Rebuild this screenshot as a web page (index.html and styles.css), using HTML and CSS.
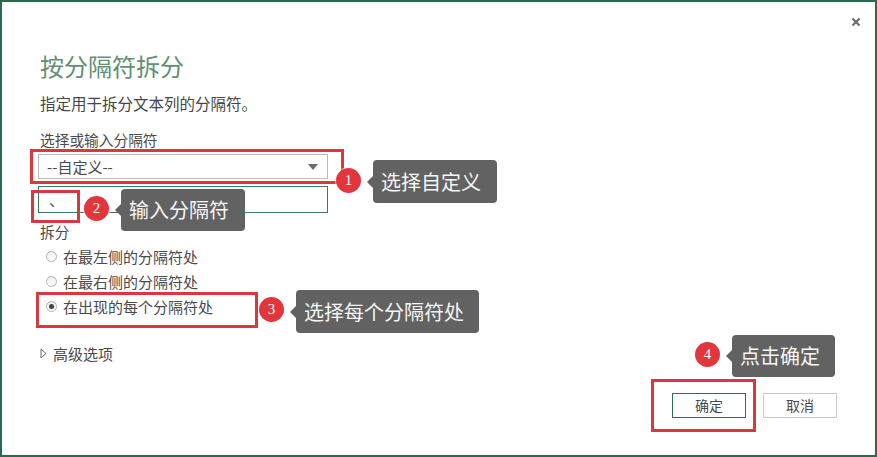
FILE: index.html
```html
<!DOCTYPE html>
<html lang="zh-CN">
<head>
<meta charset="utf-8">
<title>按分隔符拆分</title>
<link rel="stylesheet" href="styles.css">
</head>
<body>
<div class="dialog">
  <button class="close" aria-label="关闭">
    <svg width="10" height="10" viewBox="0 0 10 10"><path d="M1.5 1.5 L8.5 8.5 M8.5 1.5 L1.5 8.5" stroke="#6e6e6e" stroke-width="2.2"/></svg>
  </button>

  <h1 class="title">按分隔符拆分</h1>
  <p class="subtitle">指定用于拆分文本列的分隔符。</p>

  <div class="label">选择或输入分隔符</div>
  <div class="select">
    <span class="select-text">--自定义--</span>
    <svg class="select-arrow" width="10" height="6" viewBox="0 0 10 6"><polygon points="0,0 10,0 5,6" fill="#6b6b6b"/></svg>
  </div>
  <div class="textbox">、</div>

  <div class="label split-label">拆分</div>
  <div class="radios">
    <div class="radio-row"><span class="radio"></span><span>在最左侧的分隔符处</span></div>
    <div class="radio-row"><span class="radio"></span><span>在最右侧的分隔符处</span></div>
    <div class="radio-row"><span class="radio checked"></span><span>在出现的每个分隔符处</span></div>
  </div>

  <div class="advanced">
    <svg class="adv-arrow" width="7" height="11" viewBox="0 0 7 11"><polygon points="1,1 6,5.5 1,10" fill="none" stroke="#6b6b6b" stroke-width="1"/></svg>
    <span>高级选项</span>
  </div>

  <div class="footer">
    <button class="btn btn-primary">确定</button>
    <button class="btn">取消</button>
  </div>

  <!-- annotations -->
  <div class="mark mark-1"></div>
  <div class="mark mark-2"></div>
  <div class="mark mark-3"></div>
  <div class="mark mark-4"></div>

  <div class="badge badge-1">1</div>
  <div class="badge badge-2">2</div>
  <div class="badge badge-3">3</div>
  <div class="badge badge-4">4</div>

  <div class="tip tip-1">选择自定义</div>
  <div class="tip tip-2">输入分隔符</div>
  <div class="tip tip-3">选择每个分隔符处</div>
  <div class="tip tip-4">点击确定</div>
</div>
</body>
</html>
```

FILE: styles.css
```css
* { box-sizing: border-box; }

html, body {
  margin: 0;
  padding: 0;
  background: #ffffff;
}

.dialog {
  position: relative;
  width: 877px;
  height: 457px;
  border: 2px solid #2a6a4e;
  padding: 48px 38px 0 36px;
  font-family: "Noto Sans CJK SC", "Noto Sans", sans-serif;
  font-weight: 400;
  color: #4a4a4a;
  font-size: 15px;
  background: #ffffff;
  display: flex;
  flex-direction: column;
}

.close {
  position: absolute;
  top: 13px;
  right: 12px;
  width: 14px;
  height: 14px;
  padding: 2px;
  border: 0;
  background: transparent;
  display: flex;
}

.title {
  margin: 0;
  font-size: 24px;
  line-height: 32px;
  font-weight: 400;
  color: #628f75;
  padding-left: 2px;
}

.subtitle {
  margin: 11px 0 0;
  font-size: 15.5px;
  line-height: 20px;
  color: #474747;
  padding-left: 2px;
}

.label {
  margin-top: 17px;
  font-size: 14.7px;
  line-height: 20px;
  color: #4a4a4a;
  padding-left: 2px;
}

.select {
  margin-top: 4px;
  width: 290px;
  height: 25px;
  border: 1px solid #b9b9b9;
  display: flex;
  align-items: center;
  justify-content: space-between;
  padding: 0 9px 0 8px;
  font-size: 15px;
  color: #4a4a4a;
}

.select-text { line-height: 20px; }

.textbox {
  margin-top: 7px;
  width: 290px;
  height: 27px;
  border: 1px solid #3d7a5c;
  padding: 0 10px;
  font-size: 15px;
  line-height: 25px;
  color: #4a4a4a;
}

.split-label { margin-top: 9px; }

.radios {
  margin-top: 2px;
  display: flex;
  flex-direction: column;
}

.radio-row {
  height: 25px;
  display: flex;
  align-items: center;
  gap: 6px;
  padding-left: 8px;
  font-size: 15px;
  color: #4a4a4a;
}

.radio {
  width: 11px;
  height: 11px;
  border-radius: 50%;
  border: 1px solid #b3b3b3;
  background: linear-gradient(#eeeeee, #ffffff);
  display: flex;
  align-items: center;
  justify-content: center;
  flex: none;
}

.radio.checked::after {
  content: "";
  width: 5px;
  height: 5px;
  border-radius: 50%;
  background: #444444;
}

.advanced {
  margin-top: 24px;
  display: flex;
  align-items: center;
  gap: 6px;
  height: 20px;
  font-size: 15px;
  color: #4a4a4a;
  padding-left: 2px;
}

.adv-arrow { flex: none; }

.footer {
  margin-top: 30px;
  display: flex;
  justify-content: flex-end;
  gap: 17px;
}

.btn {
  width: 74px;
  height: 25px;
  border: 1px solid #cacaca;
  background: #ffffff;
  font-family: "Noto Sans CJK SC", "Noto Sans", sans-serif;
  font-weight: 400;
  font-size: 14px;
  color: #4a4a4a;
  padding: 0;
  line-height: 23px;
}

.btn-primary { border-color: #2f6d52; }

/* annotation overlays */
.mark {
  position: absolute;
  border: 3px solid #d8393f;
}
.mark-1 { left: 28px; top: 147px; width: 314px; height: 35px; }
.mark-2 { left: 29px; top: 188px; width: 49px; height: 33px; }
.mark-3 { left: 34px; top: 290px; width: 222px; height: 36px; }
.mark-4 { left: 649px; top: 377px; width: 105px; height: 53px; }

.badge {
  position: absolute;
  width: 25px;
  height: 25px;
  border-radius: 50%;
  background: #e2363c;
  color: #ffffff;
  font-family: "Liberation Serif", "DejaVu Serif", serif;
  font-size: 15px;
  line-height: 25px;
  text-align: center;
  box-shadow: 0 0 0 1px rgba(255,255,255,0.6);
}
.badge-1 { left: 334px; top: 166px; }
.badge-2 { left: 82px; top: 194px; }
.badge-3 { left: 257px; top: 295px; }
.badge-4 { left: 693px; top: 340px; }

.tip {
  position: absolute;
  background: #626262;
  color: #f6f6f6;
  border-radius: 4px;
  font-size: 20px;
  font-weight: 400;
  line-height: 24px;
  display: flex;
  align-items: center;
  justify-content: flex-start;
  padding-left: 8px;
  white-space: nowrap;
}
.tip::before {
  content: "";
  position: absolute;
  left: -6px;
  top: 50%;
  margin-top: -6px;
  border-style: solid;
  border-width: 6px 6px 6px 0;
  border-color: transparent #626262 transparent transparent;
}
.tip-1 { left: 371px; top: 158px; width: 124px; height: 43px; }
.tip-2 { left: 119px; top: 187px; width: 124px; height: 42px; }
.tip-3 { left: 294px; top: 288px; width: 183px; height: 43px; }
.tip-4 { left: 730px; top: 333px; width: 103px; height: 42px; }
```
